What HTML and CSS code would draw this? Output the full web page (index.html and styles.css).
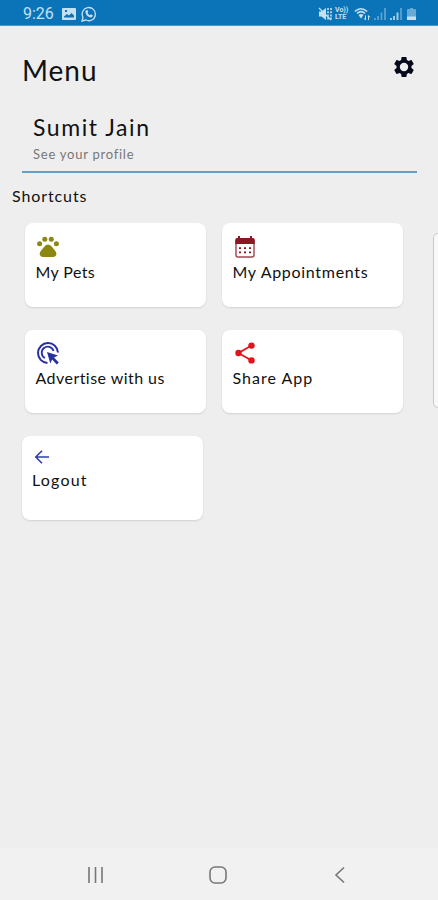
FILE: index.html
```html
<!DOCTYPE html>
<html lang="en">
<head>
<meta charset="utf-8">
<title>Menu</title>
<link rel="stylesheet" href="styles.css">
</head>
<body>
<div class="screen">
  <header class="status">
    <span class="time">9:26</span>
    <svg class="st-image" width="14" height="12" viewBox="0 0 14 12"><path fill="currentColor" fill-rule="evenodd" d="M1 0h12q1 0 1 1v10q0 1-1 1H1q-1 0-1-1V1q0-1 1-1zM2 9.500h10V7.500L9.500 5 7 7.500 5 6 2 8.500zM3 2v2h2V2z"/></svg>
    <svg class="st-chat" width="16" height="16" viewBox="0 0 16 16"><path d="M1 15l1-3.700A6.600 6.600 0 1 1 4.800 14z" fill="none" stroke="currentColor" stroke-width="1.300"/><path d="M5.300 4.200l1.200-.2.800 2-.8.900q.8 1.500 2.400 2.300l1-.9 1.900.9q0 2-2 2.200Q5 10.800 4.400 6q0-1 .9-1.800z" fill="currentColor"/></svg>
    <span class="grow"></span>
    <svg class="st-mute" width="14" height="14" viewBox="0 0 14 14"><path d="M1 4.500h2.500L8 1v12L3.500 9.500H1z" fill="currentColor"/><path d="M1 1l12 12" stroke="currentColor" stroke-width="1.300"/><path d="M10 1v12M13 1v12" stroke="currentColor" stroke-width="1.600" stroke-dasharray="2 1.200"/></svg>
    <span class="volte"><span>Vo))</span><span>LTE</span></span>
    <svg class="st-wifi" width="17" height="14" viewBox="0 0 17 14"><path d="M.8 4.500q6-5.500 12.400 0M3 6.500q4-3.700 8 0" fill="none" stroke="currentColor" stroke-width="1.500"/><path d="M4.500 8q2.500-2 5 0L7 11.500z" fill="currentColor"/><path d="M11.500 8.500V13m-1.500-1.800l1.500 1.700M14.500 13V8.600m1.500 1.700l-1.500-1.700" stroke="currentColor" fill="none"/></svg>
    <svg class="st-signal dim" width="12" height="12" viewBox="0 0 12 12"><path d="M1 12v-2M4 12V8M7.500 12V4.500M11 12V0" stroke="currentColor" stroke-width="1.700"/></svg>
    <svg class="st-signal" width="12" height="12" viewBox="0 0 12 12"><path d="M1 12v-2M4 12V8M7.500 12V4.500" stroke="currentColor" stroke-width="2" opacity=".8"/><path d="M11 12V0" stroke="currentColor" stroke-width="1.700" opacity=".45"/></svg>
    <svg class="st-battery" width="9" height="12" viewBox="0 0 9 12"><path d="M3 0h3v1h2q1 0 1 1v9q0 1-1 1H1q-1 0-1-1V2q0-1 1-1h2z" fill="currentColor" opacity=".5"/><path d="M0 8.500h9V12H0z" fill="currentColor"/></svg>
  </header>

  <main class="content">
    <div class="title-row">
      <h1 class="title">Menu</h1>
      <svg class="gear" width="24" height="24" viewBox="0 0 24 24"><path fill="currentColor" d="M19.430 12.980c.04-.32.070-.64.070-.98s-.03-.66-.07-.98l2.110-1.650c.19-.15.240-.42.120-.64l-2-3.460c-.12-.22-.39-.3-.61-.22l-2.490 1c-.52-.4-1.080-.73-1.690-.98l-.38-2.650C14.460 2.180 14.250 2 14 2h-4c-.25 0-.46.180-.49.420l-.38 2.650c-.61.250-1.170.59-1.690.98l-2.490-1c-.23-.09-.49 0-.61.220l-2 3.460c-.13.220-.07.490.12.640l2.110 1.650c-.04.320-.07.650-.07.980s.03.660.07.980l-2.110 1.650c-.19.150-.24.420-.12.640l2 3.460c.12.220.39.300.61.220l2.490-1c.52.400 1.080.73 1.690.98l.38 2.650c.03.240.24.420.49.420h4c.25 0 .46-.18.490-.42l.38-2.650c.61-.25 1.170-.59 1.690-.98l2.490 1c.23.090.49 0 .61-.22l2-3.460c.12-.22.070-.49-.12-.64zM12 16.200A4.200 4.200 0 1 1 12 7.800a4.200 4.200 0 0 1 0 8.400z"/></svg>
    </div>
    <section class="profile">
      <div class="name">Sumit Jain</div>
      <div class="see">See your profile</div>
    </section>
    <h2 class="shortcuts">Shortcuts</h2>
    <div class="grid">
      <div class="card">
        <svg class="icon paw" width="24" height="24" viewBox="0 0 24 24"><g fill="currentColor"><circle cx="3.600" cy="8.700" r="2.500"/><circle cx="8.800" cy="4.300" r="2.500"/><circle cx="15.300" cy="4.300" r="2.500"/><circle cx="20.400" cy="8.700" r="2.500"/><path d="M12 9.400q1.800 0 3.200 1.600l3.500 4.200q2.400 2.500 1.400 5-.7 1.700-3 1.700H7q-2.400 0-3-1.700-1-2.500 1.400-5L8.900 11Q10.200 9.400 12 9.400z"/></g></svg>
        <span class="label pets">My Pets</span>
      </div>
      <div class="card">
        <svg class="icon cal" width="24" height="24" viewBox="0 0 24 24"><rect x="3" y="4" width="18" height="18" rx="2" fill="none" stroke="currentColor" stroke-width="1.400" opacity=".8"/><path d="M2.300 9V5q0-2 2-2h15.400q2 0 2 2v4zM5 1h2v3H5zM17 1h2v3h-2z" fill="currentColor"/><path d="M6 12.200h2v1.800H6zm5 0h2v1.800h-2zm5 0h2v1.800h-2zM6 16.500h2v1.800H6zm5 0h2v1.800h-2zm5 0h2v1.800h-2z" fill="currentColor"/></svg>
        <span class="label appts">My Appointments</span>
      </div>
      <div class="card second">
        <svg class="icon click" width="24" height="24" viewBox="0 0 24 24"><path d="M11.500 22A10 10 0 1 1 22 11.500" fill="none" stroke="currentColor" stroke-width="2"/><path d="M9 17A6 6 0 1 1 17.500 10" fill="none" stroke="currentColor" stroke-width="1.800"/><path d="M11 11l11 3.600-4 2 4.800 4.800-2 2-4.700-4.800-1.800 4z" fill="currentColor"/></svg>
        <span class="label adv">Advertise with us</span>
      </div>
      <div class="card second">
        <svg class="icon share" width="24" height="24" viewBox="0 0 24 24"><path d="M18.500 4.500L5.500 12l13 7.500" fill="none" stroke="currentColor" stroke-width="1.800"/><g fill="currentColor"><circle cx="18.500" cy="4.600" r="3.200"/><circle cx="5.500" cy="12" r="3.200"/><circle cx="18.500" cy="19.400" r="3.200"/></g></svg>
        <span class="label app">Share App</span>
      </div>
    </div>
    <div class="card logout">
      <svg class="icon back" width="20" height="20" viewBox="0 0 20 20"><path d="M17 10H4m6-6.200L3.800 10l6.200 6.200" fill="none" stroke="currentColor" stroke-width="1.600"/></svg>
      <span class="label out">Logout</span>
    </div>
  </main>

  <footer class="nav">
    <svg width="18" height="18" viewBox="0 0 18 18"><path d="M2 1v16M8.500 1v16M15 1v16" stroke="currentColor" stroke-width="1.600"/></svg>
    <svg width="20" height="20" viewBox="0 0 20 20"><rect x="2" y="2" width="16" height="16" rx="5" fill="none" stroke="currentColor" stroke-width="1.600"/></svg>
    <svg width="18" height="18" viewBox="0 0 18 18"><path d="M13 1.500L5 9l8 7.500" fill="none" stroke="currentColor" stroke-width="1.600"/></svg>
  </footer>
  <div class="edge-handle"></div>
</div>
</body>
</html>
```
FILE: styles.css
```css
* { box-sizing: border-box; }
body { margin: 0; background: #eee; }
.screen {
  position: relative;
  width: 438px;
  height: 900px;
  display: flex;
  flex-direction: column;
  overflow: hidden;
  background: #eee;
  color: #111;
  font-family: Lato, "Liberation Sans", sans-serif;
  font-variant-ligatures: none;
}
.status {
  height: 26px;
  padding: 2px 22px 0 23px;
  display: flex;
  align-items: center;
  background: #0b74b8;
  border-bottom: 1px solid #4d98c8;
  color: #c5e0f1;
  flex: none;
}
.time { width: 31px; font: 16px/20px Roboto, sans-serif; white-space: nowrap; }
.st-image { margin-left: 8px; }
.st-chat { margin-left: 5px; }
.grow { flex: 1; }
.volte {
  width: 15px;
  margin-left: 3px;
  display: flex;
  flex-direction: column;
  font: bold 7px/6.500px Roboto, sans-serif;
}
.st-wifi { margin-left: 4px; }
.st-signal { margin-left: 4px; }
.st-signal.dim { opacity: .45; margin-left: 3px; }
.st-battery { margin-left: 5px; }
.content { flex: 1; }
.title-row {
  height: 82px;
  padding: 0 22px 0 22px;
  display: flex;
  justify-content: space-between;
  align-items: center;
}
.title { margin: 5px 0 0; font-size: 28px; line-height: 34px; font-weight: 400; letter-spacing: 1px; }
.gear { color: #050a1c; }
.profile {
  height: 65px;
  margin: 0 21px 0 22px;
  padding: 4px 0 0 11px;
  border-bottom: 2px solid #66a0c4;
}
.name { font-size: 23px; line-height: 30px; letter-spacing: 1.550px; }
.see { margin-top: 2px; font-size: 13px; line-height: 20px; letter-spacing: .750px; color: #777; }
.shortcuts { margin: 13px 0 0 12px; font-size: 16px; line-height: 20px; font-weight: 400; letter-spacing: .9px; }
.grid {
  margin: 17px 35px 0 25px;
  display: grid;
  grid-template-columns: 181px 181px;
  column-gap: 16px;
  row-gap: 23px;
}
.card {
  height: 83.500px;
  padding: 12px 11px 12px 10.500px;
  display: flex;
  flex-direction: column;
  align-items: flex-start;
  background: #fff;
  border-radius: 8px;
  box-shadow: 0 1px 2px rgba(0, 0, 0, .12);
}
.second { padding-top: 11px; }
.label { margin-top: 3px; font-size: 16px; line-height: 20px; white-space: nowrap; }
.pets { letter-spacing: .4px; }
.appts { letter-spacing: .7px; }
.adv { letter-spacing: .45px; }
.app { letter-spacing: 1px; }
.out { letter-spacing: 1.200px; }
.paw { color: #8b8711; }
.cal { color: #8b1720; }
.click { color: #2930a0; }
.share { color: #e3131c; }
.logout { width: 181px; margin: 23px 0 0 21.500px; padding-top: 11px; }
.back { color: #303fae; }
.nav {
  height: 52px;
  padding: 2px 89px 0 87px;
  display: flex;
  justify-content: space-between;
  align-items: center;
  background: #f1f1f1;
  color: #777;
}
.edge-handle {
  position: absolute;
  top: 233px;
  right: -6px;
  width: 11px;
  height: 175px;
  background: #f8f8f8;
  border: 1px solid #c8c8c8;
  border-radius: 5px;
}
```
